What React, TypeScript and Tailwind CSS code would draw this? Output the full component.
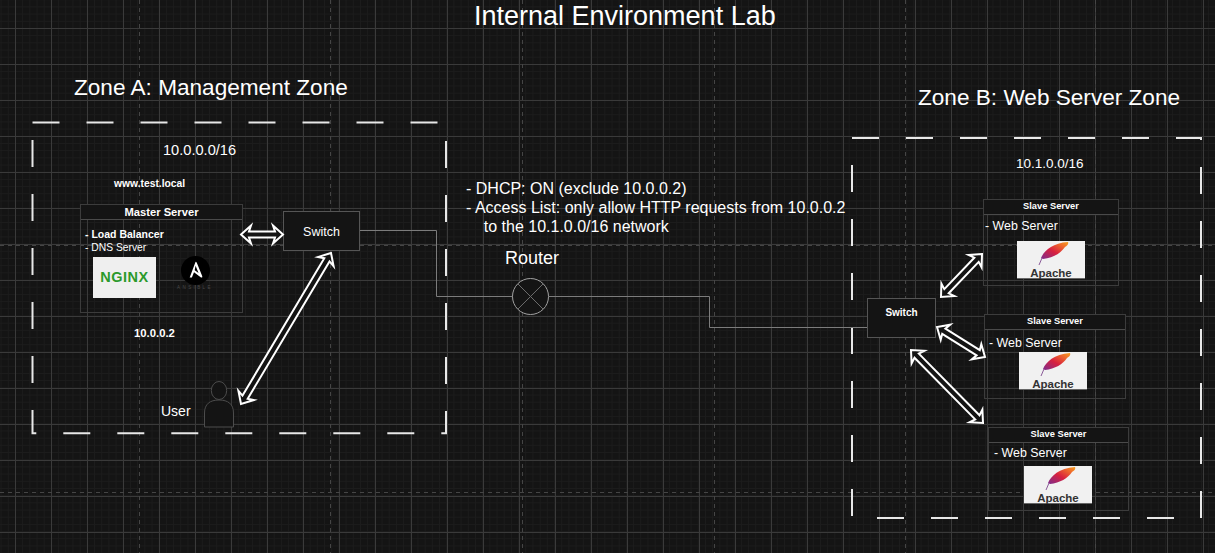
const font = "font-['Liberation_Sans',Arial,sans-serif]";

// double line arrow with a head on both ends, like draw.io's "link" shape
function DoubleArrow({ x1, y1, x2, y2 }: { x1: number; y1: number; x2: number; y2: number }) {
  const len = Math.hypot(x2 - x1, y2 - y1);
  const ux = (x2 - x1) / len;
  const uy = (y2 - y1) / len;
  const nx = -uy;
  const ny = ux;
  const pt = (along: number, side: number) =>
    `${(x1 + ux * along + nx * side).toFixed(1)},${(y1 + uy * along + ny * side).toFixed(1)}`;
  const head = 10;
  const w = 3;
  const wing = 9;
  const points = [
    pt(0, 0),
    pt(head, wing),
    pt(head - 2, w),
    pt(len - head + 2, w),
    pt(len - head, wing),
    pt(len, 0),
    pt(len - head, -wing),
    pt(len - head + 2, -w),
    pt(head - 2, -w),
    pt(head, -wing),
  ].join(" ");
  return <polygon points={points} fill="#141414" stroke="#ffffff" strokeWidth="2" strokeLinejoin="miter" />;
}

function Zone({ x1, y1, x2, y2 }: { x1: number; y1: number; x2: number; y2: number }) {
  return (
    <rect
      x={x1}
      y={y1}
      width={x2 - x1}
      height={y2 - y1}
      fill="none"
      stroke="#e8e8e8"
      strokeWidth="2"
      strokeDasharray="27 27"
    />
  );
}

function Label({ x, y, className, children }: { x: number; y: number; className: string; children: React.ReactNode }) {
  return (
    <div className={`absolute whitespace-pre text-white ${className}`} style={{ left: x, top: y }}>
      {children}
    </div>
  );
}

function ServerBox({
  x,
  y,
  w,
  h,
  title,
  titleClass,
  children,
}: {
  x: number;
  y: number;
  w: number;
  h: number;
  title: string;
  titleClass: string;
  children: React.ReactNode;
}) {
  return (
    <div
      className="absolute flex flex-col border border-[#3c3c3c] text-white"
      style={{ left: x, top: y, width: w, height: h }}
    >
      <div className={`flex h-[15px] shrink-0 items-center justify-center border-b border-[#4a4a4a] bg-[#141414] font-bold ${titleClass}`}>
        {title}
      </div>
      {children}
    </div>
  );
}

function ApacheLogo() {
  return (
    <div className="flex h-[38px] w-[68px] flex-col items-center border-b border-[#666] bg-[#f1f1f1]">
      <svg width="36" height="26" viewBox="0 0 36 26" className="shrink-0">
        <defs>
          <linearGradient id="feather" x1="0" y1="1" x2="1" y2="0">
            <stop offset="0" stopColor="#7b2d8e" />
            <stop offset="0.45" stopColor="#d8203f" />
            <stop offset="0.8" stopColor="#f0702a" />
            <stop offset="1" stopColor="#f6a01e" />
          </linearGradient>
        </defs>
        <path d="M8 17C11 10 19 2 35 1C36 3 34 5 32 6C28 12 20 17 10 18Z" fill="url(#feather)" />
        <path d="M9 17L6 24" stroke="#8a5a98" strokeWidth="1" fill="none" />
      </svg>
      <div className="text-[11.5px] font-bold leading-[12px] text-[#333]">Apache</div>
    </div>
  );
}

function SlaveServer({
  x,
  y,
  w,
  h,
  textLeft,
  textTop,
  logoTop,
  logoLeft,
}: {
  x: number;
  y: number;
  w: number;
  h: number;
  textLeft: number;
  textTop: number;
  logoTop: number;
  logoLeft: number;
}) {
  return (
    <ServerBox x={x} y={y} w={w} h={h} title="Slave Server" titleClass="text-[9.3px]">
      <div className="text-[12.4px] leading-[16px]" style={{ marginTop: textTop, paddingLeft: textLeft }}>
        - Web Server
      </div>
      <div style={{ marginTop: logoTop, marginLeft: logoLeft }}>
        <ApacheLogo />
      </div>
    </ServerBox>
  );
}

export default function App() {
  return (
    <div
      className={`relative h-[553px] w-[1215px] overflow-hidden bg-[#141414] ${font} [background-image:linear-gradient(to_right,#3a3a3a_1px,transparent_1px),linear-gradient(to_bottom,#3a3a3a_1px,transparent_1px),linear-gradient(to_right,#1c1c1c_1px,transparent_1px),linear-gradient(to_bottom,#1c1c1c_1px,transparent_1px)] [background-position:15px_28px,15px_28px,15px_28px,15px_28px] [background-size:36px_36px,36px_36px,7.2px_7.2px,7.2px_7.2px]`}
    >
      <svg width="1215" height="553" className="absolute left-0 top-0">
        {/* page break lines of the canvas */}
        <g stroke="#454545" strokeWidth="1" strokeDasharray="4 4">
          {[139, 330, 522, 714, 905, 1095].map((x) => (
            <line key={x} x1={x + 0.5} y1="0" x2={x + 0.5} y2="553" />
          ))}
          <line x1="0" y1="245.5" x2="1215" y2="245.5" />
          <line x1="0" y1="492.5" x2="1215" y2="492.5" />
        </g>

        <Zone x1={32.5} y1={122.5} x2={446} y2={433.3} />
        <Zone x1={852} y1={138} x2={1201} y2={518} />

        {/* links */}
        <g fill="none" stroke="#7c7c7c" strokeWidth="1">
          <path d="M360 230.5H436.5V296.5H513" />
          <path d="M549 296.5H709.5V327.5H867" />
        </g>

        {/* router */}
        <g fill="#141414" stroke="#a0a0a0" strokeWidth="1">
          <circle cx="530.5" cy="296.5" r="18" />
          <path d="M517.8 283.8L543.2 309.2M543.2 283.8L517.8 309.2" stroke="#6c6c6c" />
        </g>

        {/* user */}
        <g fill="#141414" stroke="#4c4c4c" strokeWidth="1">
          <path d="M204.5 427V413C204.5 404 210 400 219 400C228 400 233.5 404 233.5 413V427Z" />
          <ellipse cx="219" cy="390.5" rx="7.7" ry="9" />
        </g>
      </svg>

      <Label x={474} y={-1} className="text-[27px] leading-[34px]">Internal Environment Lab</Label>
      <Label x={74} y={73} className="text-[22.6px] leading-[30px]">Zone A: Management Zone</Label>
      <Label x={918} y={83} className="text-[22.6px] leading-[30px]">Zone B: Web Server Zone</Label>
      <Label x={163} y={141} className="text-[14.6px] leading-[18px]">10.0.0.0/16</Label>
      <Label x={1016} y={156} className="text-[13.5px] leading-[16px]">10.1.0.0/16</Label>
      <Label x={114} y={178} className="text-[10.3px] font-bold leading-[12px]">www.test.local</Label>
      <Label x={134} y={327} className="text-[11.3px] font-bold leading-[13px]">10.0.0.2</Label>
      <Label x={161} y={403} className="text-[14px] leading-[17px]">User</Label>
      <Label x={505} y={248} className="text-[18px] leading-[20px]">Router</Label>
      <Label x={466} y={179} className="text-[16px] leading-[19px]">
        {"- DHCP: ON (exclude 10.0.0.2)\n- Access List: only allow HTTP requests from 10.0.0.2\n    to the 10.1.0.0/16 network"}
      </Label>

      <ServerBox x={80} y={204} w={163} h={109} title="Master Server" titleClass="text-[11.2px]">
        <div className="pl-[4px] pt-[8px] text-[10.5px] font-bold leading-[13px]">
          <div>- Load Balancer</div>
          <div className="text-[10.3px] font-normal">- DNS Server</div>
        </div>
        <div className="flex items-start pl-[12px] pt-[3px]">
          <div className="flex h-[41px] w-[63px] items-center justify-center bg-[#efefef] text-[14.5px] font-bold tracking-[0.5px] text-[#2b9a2b]">
            NGINX
          </div>
          <div className="ml-[21px] flex w-[36px] flex-col items-center">
            <svg width="29" height="29" viewBox="0 0 29 29" className="-mt-[1px]">
              <circle cx="14.5" cy="14.5" r="14.5" fill="#000" />
              <path
                fillRule="evenodd"
                d="M14.5 6L8.7 21.5H10.9L13 16.3L20 21.5Q21.8 22 21.2 20L15.8 6.8Q15 5.5 14.5 6ZM14.6 9.8L17.5 17L13.7 14.2Z"
                fill="#fff"
              />
            </svg>
            <div className="whitespace-nowrap text-[4.5px] leading-[5px] tracking-[2.4px] text-[#4a4a4a]">ANSIBLE</div>
          </div>
        </div>
      </ServerBox>

      <div className="absolute left-[283px] top-[211px] flex h-[40px] w-[77px] items-center justify-center border border-[#555] bg-[#141414] pt-[2px] text-[12.5px] text-white">
        Switch
      </div>
      <div className="absolute left-[867px] top-[298px] flex h-[40px] w-[69px] justify-center border border-[#555] bg-[#141414] pt-[6px] text-[10px] font-bold text-white">
        Switch
      </div>

      <SlaveServer x={983} y={199} w={136} h={87} textLeft={1} textTop={3} logoTop={7} logoLeft={33} />
      <SlaveServer x={984} y={314} w={142} h={85} textLeft={4} textTop={5} logoTop={1} logoLeft={34} />
      <SlaveServer x={988} y={427} w={141} h={84} textLeft={5} textTop={2} logoTop={5} logoLeft={35} />

      <svg width="1215" height="553" className="pointer-events-none absolute left-0 top-0">
        <DoubleArrow x1={241} y1={234.5} x2={283} y2={234.5} />
        <DoubleArrow x1={331} y1={253} x2={241} y2={404} />
        <DoubleArrow x1={982} y1={254} x2={941} y2={297} />
        <DoubleArrow x1={937} y1={327} x2={985} y2={357} />
        <DoubleArrow x1={911} y1={350} x2={983} y2={423} />
      </svg>
    </div>
  );
}
